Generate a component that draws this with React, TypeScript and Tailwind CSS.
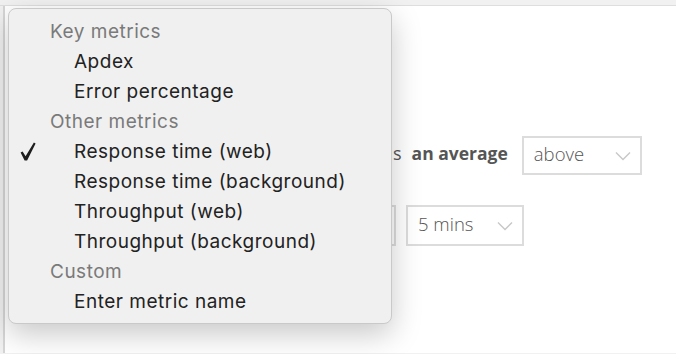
type Row = { label: string; header?: boolean; checked?: boolean };

const rows: Row[] = [
  { label: 'Key metrics', header: true },
  { label: 'Apdex' },
  { label: 'Error percentage' },
  { label: 'Other metrics', header: true },
  { label: 'Response time (web)', checked: true },
  { label: 'Response time (background)' },
  { label: 'Throughput (web)' },
  { label: 'Throughput (background)' },
  { label: 'Custom', header: true },
  { label: 'Enter metric name' },
];

function Chevron() {
  return (
    <svg width="16" height="10" viewBox="0 0 16 10" className="text-[#c8c8c8]">
      <path d="M1 1.5 L8 8.5 L15 1.5" fill="none" stroke="currentColor" strokeWidth="1.4" />
    </svg>
  );
}

function Tick() {
  return (
    <svg width="16" height="19" viewBox="0 0 16 19" className="absolute left-[11px] top-[5px] text-[#1e1e1e]">
      <path d="M0.6 10.6 L2.6 9.6 L5.6 14.2 L13.9 0.6 L15.6 1.4 L7.1 18.6 L4.6 18.6 Z" fill="currentColor" />
    </svg>
  );
}

function SelectBox({ value, width, height }: { value: string; width: string; height: string }) {
  return (
    <div className={`flex items-center justify-between border-2 border-[#dcdcdc] bg-white pl-[10px] pr-[9px] ${width} ${height}`}>
      <span className="mb-[4px] text-[18.5px] font-light text-[#555] font-['Open_Sans',sans-serif]">{value}</span>
      <Chevron />
    </div>
  );
}

export default function App() {
  return (
    <div className="relative h-[354px] w-[676px] overflow-hidden bg-[#f1f1f1] font-['Inter',sans-serif]">
      <div className="h-[6px] border-b border-[#dedede]" />
      <div className="ml-[3px] h-[347px] border-l-2 border-[#d6d6d6] bg-white pt-[130px]">
        <div className="ml-[388px] flex h-[39px] items-center">
          <span className="mb-[5px] text-[18px] text-[#555] font-['Open_Sans',sans-serif]">s</span>
          <span className="mb-[5px] ml-[10px] text-[17.5px] font-bold text-[#555] font-['Open_Sans',sans-serif]">an average</span>
          <div className="ml-[14px]">
            <SelectBox value="above" width="w-[120px]" height="h-[39px]" />
          </div>
        </div>
        <div className="ml-[371px] mt-[30px] flex items-center">
          <div className="h-[41px] w-[20px] border-2 border-[#dcdcdc]" />
          <div className="ml-[10px]">
            <SelectBox value="5 mins" width="w-[118px]" height="h-[41px]" />
          </div>
        </div>
      </div>

      <div className="absolute left-[8px] top-[8px] w-[384px] rounded-[8px] border border-[#c9c9c9] bg-[#f0f0f0] pt-[8px] pb-[6px] shadow-[0_10px_30px_rgba(0,0,0,0.22)]">
        {rows.map((r) => (
          <div key={r.label} className="relative flex h-[30px] items-center">
            {r.checked && <Tick />}
            <span
              className={
                r.header
                  ? 'pl-[41px] text-[19px] tracking-[0.5px] text-[#7a7a7a]'
                  : 'pl-[65px] text-[19px] tracking-[0.5px] text-[#222]'
              }
            >
              {r.label}
            </span>
          </div>
        ))}
      </div>
    </div>
  );
}
